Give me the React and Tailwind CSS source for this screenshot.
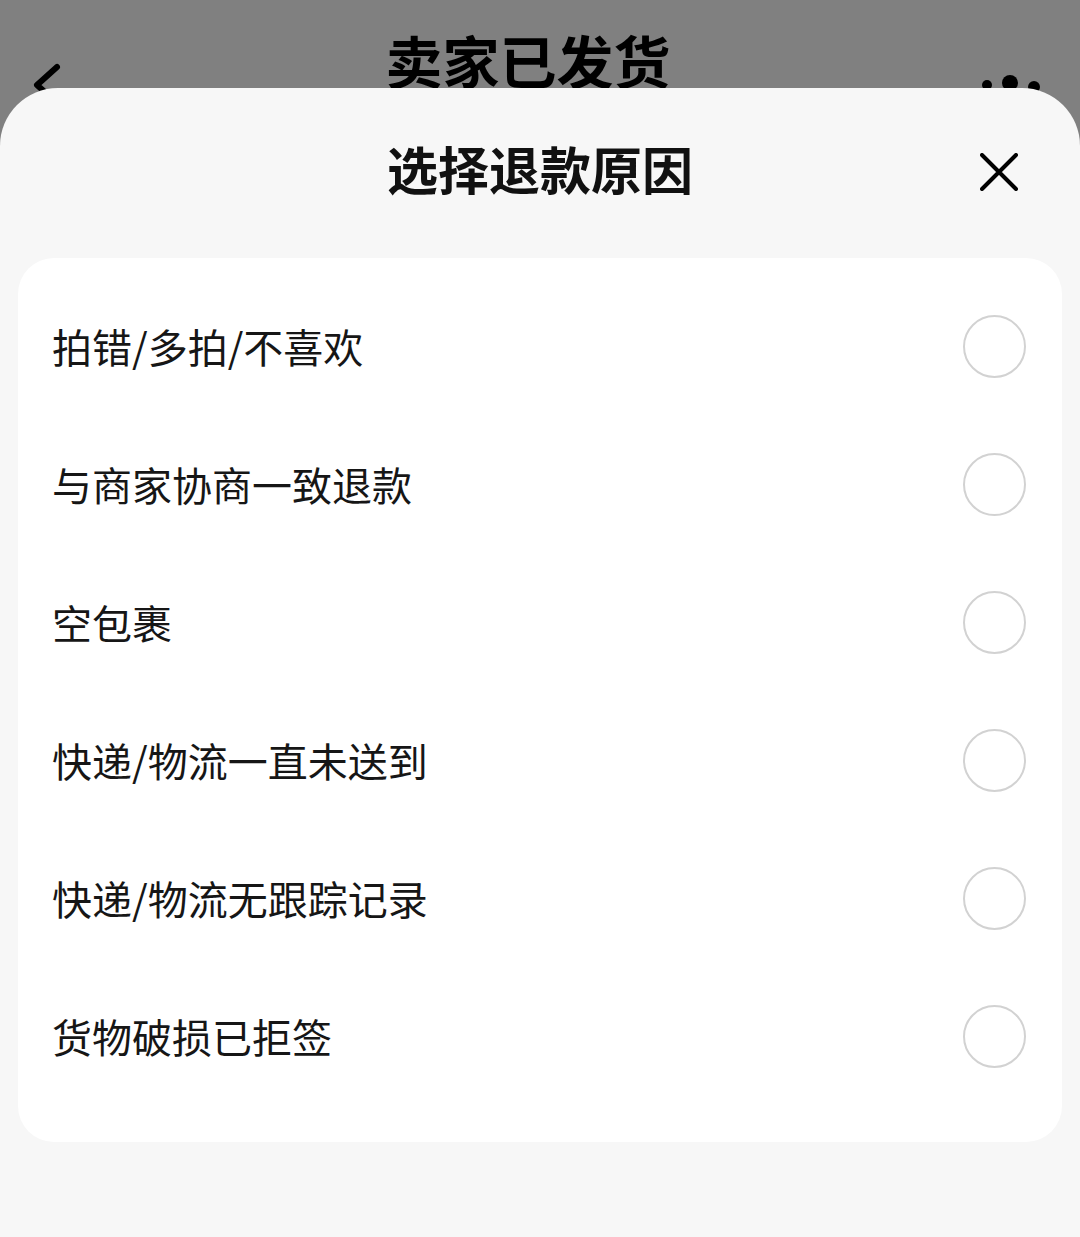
import React, { useState } from "react";

const REASONS = [
  "拍错/多拍/不喜欢",
  "与商家协商一致退款",
  "空包裹",
  "快递/物流一直未送到",
  "快递/物流无跟踪记录",
  "货物破损已拒签",
];

const FONT = { fontFamily: '"Noto Sans CJK SC", "Noto Sans", sans-serif' };

const App = () => {
  const [selected, setSelected] = useState(null);

  return (
    <div
      className="w-[1080px] h-[1237px] bg-[#808080] overflow-hidden flex flex-col"
      style={FONT}
    >
      {/* page header, mostly covered by the sheet */}
      <div className="h-[120px] shrink-0 flex items-start text-black">
        <div className="w-[110px] pl-[27px] pt-[57px]">
          <svg width="40" height="60" viewBox="0 0 40 60" fill="none">
            <polyline
              points="30,10 10,28 30,46"
              stroke="#000"
              strokeWidth="6"
              strokeLinecap="round"
              strokeLinejoin="round"
            />
          </svg>
        </div>
        <div className="flex-1 text-center pr-[24px] pt-[31px] text-[57px] leading-[57px] font-bold">
          卖家已发货
        </div>
        <div className="w-[110px] pl-[10px] pt-[72px]">
          <svg width="70" height="30" viewBox="0 0 70 30" fill="#000">
            <circle cx="7" cy="13" r="5" />
            <circle cx="30" cy="11" r="8" />
            <circle cx="54" cy="15" r="6" />
          </svg>
        </div>
      </div>

      {/* bottom sheet */}
      <div className="-mt-[32px] relative z-10 flex-1 bg-[#f7f7f7] rounded-t-[58px] flex flex-col">
        <div className="h-[160px] shrink-0 flex items-center">
          <div className="w-[120px]" />
          <div className="flex-1 text-center text-[51px] leading-none font-bold text-[#111]">
            选择退款原因
          </div>
          <div className="w-[120px] pl-[9px] pt-[8px]">
            <button className="w-[60px] h-[60px] flex items-center justify-center">
              <svg width="38" height="38" viewBox="0 0 38 38" fill="none">
                <path
                  d="M2 2 L36 36 M36 2 L2 36"
                  stroke="#000"
                  strokeWidth="4"
                  strokeLinecap="round"
                />
              </svg>
            </button>
          </div>
        </div>

        <div className="mt-[10px] mx-[18px] bg-white rounded-[36px] pt-[19px] pb-[37px]">
          {REASONS.map((reason, i) => (
            <div
              key={reason}
              onClick={() => setSelected(i)}
              className="h-[138px] flex items-center justify-between pl-[34px] pr-[36px] cursor-pointer"
            >
              <span className="text-[40px] leading-none text-[#161616]">{reason}</span>
              <span
                className={`w-[63px] h-[63px] rounded-full border-2 ${
                  selected === i ? "border-[#ff2c55] bg-[#ff2c55]" : "border-[#d2d2d2]"
                }`}
              />
            </div>
          ))}
        </div>
      </div>
    </div>
  );
};

export default App;
